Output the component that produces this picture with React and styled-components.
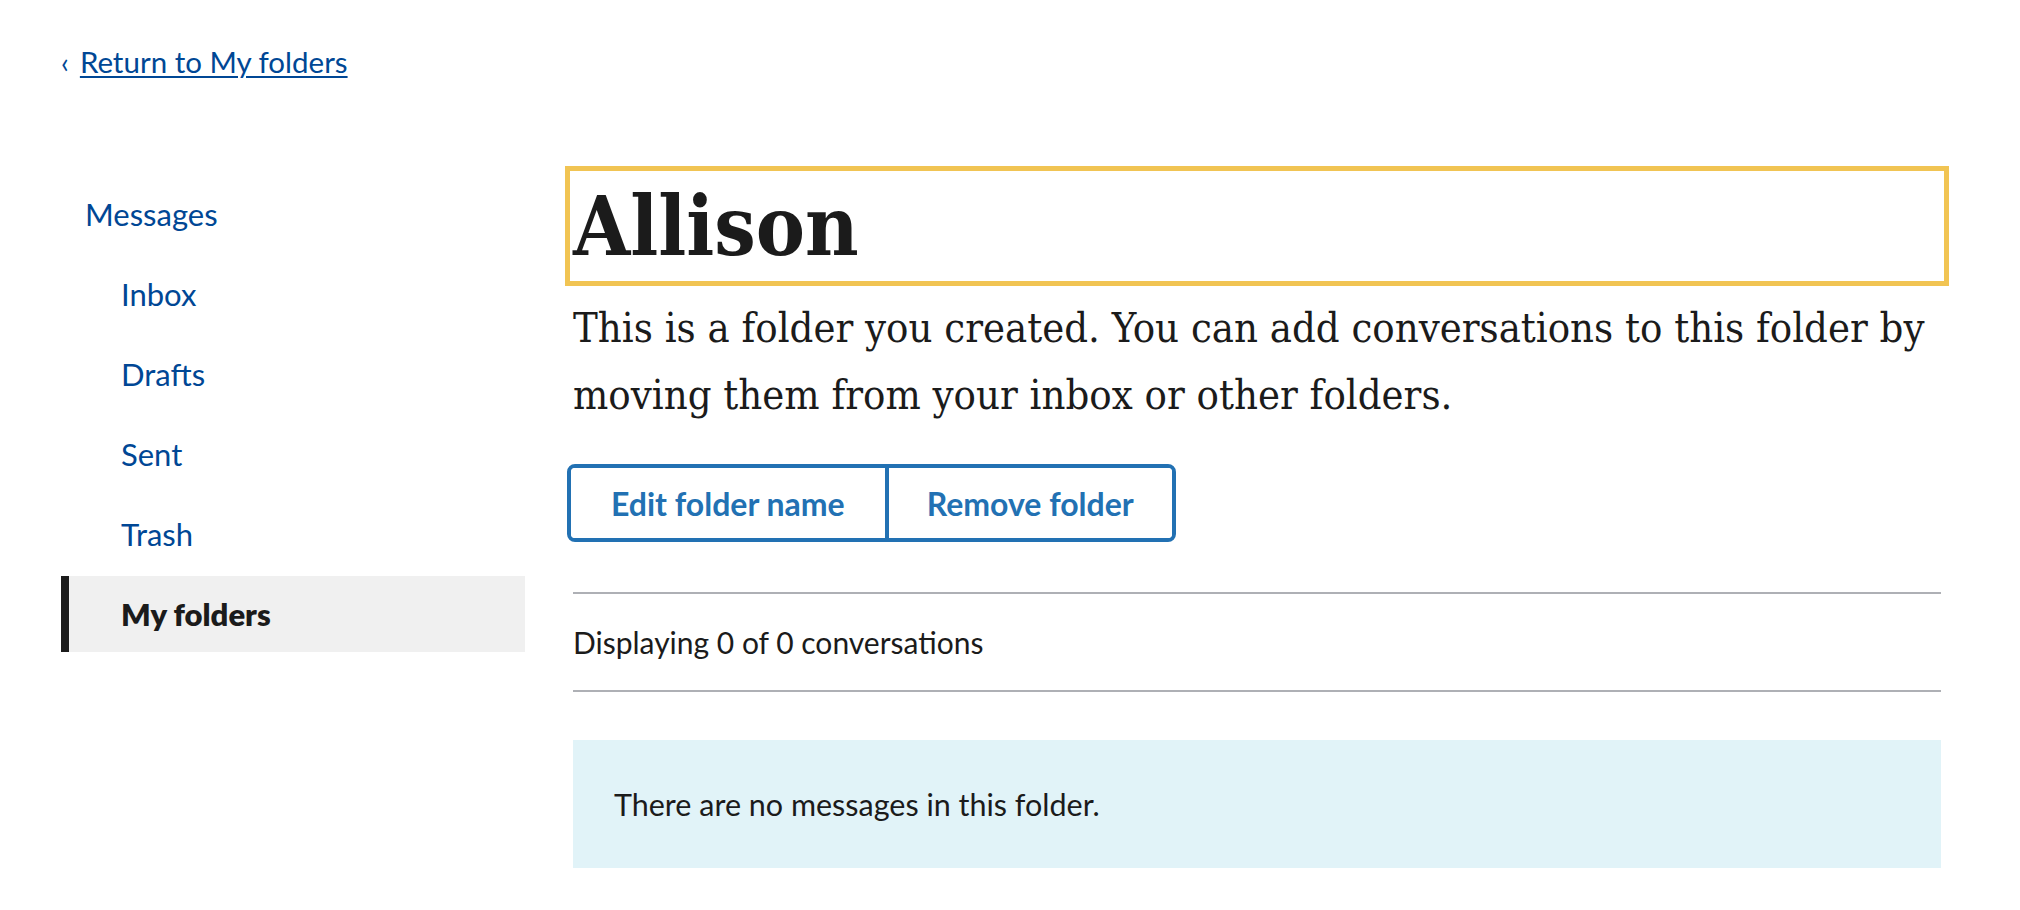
import React from "react";
import styled, { createGlobalStyle } from "styled-components";

const GlobalStyle = createGlobalStyle`
  * { box-sizing: border-box; }
  html, body { margin: 0; padding: 0; background: #ffffff; }
  body {
    font-family: Lato, "Noto Sans", "Liberation Sans", sans-serif;
    color: #1b1b1b;
  }
`;

const Page = styled.div`
  padding: 39px 79px 0 61px;
`;

const BackRow = styled.div`
  display: flex;
  align-items: center;
  height: 46px;
  font-size: 29.5px;
  line-height: 46px;
  color: #004795;
`;

const Chevron = styled.span`
  font-size: 28px;
  margin-right: 11px;
  color: #004795;
`;

const TextLink = styled.a`
  color: #004795;
  text-decoration: underline;
  text-decoration-thickness: 2px;
  text-underline-offset: 3px;
  cursor: pointer;
`;

const Columns = styled.div`
  display: flex;
  gap: 48px;
  margin-top: 89px;
`;

const SideNav = styled.nav`
  width: 464px;
  flex-shrink: 0;
  padding-top: 2px;
  display: flex;
  flex-direction: column;
  gap: 4px;
`;

const NavItem = styled.a`
  display: flex;
  align-items: center;
  height: 76px;
  font-size: 31px;
  text-decoration: none;
  cursor: pointer;
  padding-left: ${(p) => (p.$level === 0 ? 24 : 60)}px;
  color: ${(p) => (p.$active ? "#1b1b1b" : "#004795")};
  font-weight: ${(p) => (p.$active ? 800 : 400)};
  background: ${(p) => (p.$active ? "#f0f0f0" : "transparent")};
  border-left: ${(p) => (p.$active ? "8px solid #1b1b1b" : "none")};
  ${(p) => (p.$active ? "padding-left: 52px;" : "")}
`;

const Main = styled.main`
  flex: 1;
  min-width: 0;
`;

const Title = styled.h1`
  margin: 0;
  font-family: "DejaVu Serif Condensed", "DejaVu Serif", serif;
  font-stretch: condensed;
  font-weight: 700;
  font-size: 82px;
  line-height: 104px;
  color: #1b1b1b;
  outline: 5px solid #f1c453;
  outline-offset: 3px;
`;

const Intro = styled.p`
  margin: 17px 0 0;
  font-family: "DejaVu Serif Condensed", "DejaVu Serif", serif;
  font-stretch: condensed;
  font-size: 41.4px;
  line-height: 67px;
  color: #1b1b1b;
`;

const ButtonGroup = styled.div`
  display: flex;
  width: fit-content;
  margin: 35px 0 0 -6px;
  height: 78px;
  border: 4px solid #2271b3;
  border-radius: 8px;
  overflow: hidden;
`;

const GroupButton = styled.button`
  background: #ffffff;
  border: none;
  padding: 0 ${(p) => p.$pad}px;
  font-family: Lato, "Noto Sans", sans-serif;
  font-weight: 700;
  font-size: 32px;
  color: #2271b3;
  cursor: pointer;
  & + & {
    border-left: 4px solid #2271b3;
  }
`;

const Rule = styled.div`
  height: 2px;
  background: #aeb0b5;
  margin-top: ${(p) => p.$top}px;
`;

const CountRow = styled.div`
  height: 96px;
  display: flex;
  align-items: center;
  font-size: 30px;
  color: #1b1b1b;
`;

const InfoBox = styled.div`
  margin-top: 48px;
  height: 128px;
  background: #e1f3f8;
  padding: 0 41px;
  display: flex;
  align-items: center;
  font-size: 30.5px;
  color: #1b1b1b;
`;

const navItems = [
  { label: "Messages", level: 0 },
  { label: "Inbox", level: 1 },
  { label: "Drafts", level: 1 },
  { label: "Sent", level: 1 },
  { label: "Trash", level: 1 },
  { label: "My folders", level: 1, active: true },
];

export default function App() {
  return (
    <>
      <GlobalStyle />
      <Page>
        <BackRow>
          <Chevron>‹</Chevron>
          <TextLink>Return to My folders</TextLink>
        </BackRow>
        <Columns>
          <SideNav>
            {navItems.map((item) => (
              <NavItem key={item.label} $level={item.level} $active={item.active}>
                {item.label}
              </NavItem>
            ))}
          </SideNav>
          <Main>
            <Title>Allison</Title>
            <Intro>
              This is a folder you created. You can add conversations to this folder by
              moving them from your inbox or other folders.
            </Intro>
            <ButtonGroup>
              <GroupButton $pad={40}>Edit folder name</GroupButton>
              <GroupButton $pad={38}>Remove folder</GroupButton>
            </ButtonGroup>
            <Rule $top={50} />
            <CountRow>Displaying 0 of 0 conversations</CountRow>
            <Rule $top={0} />
            <InfoBox>There are no messages in this folder.</InfoBox>
          </Main>
        </Columns>
      </Page>
    </>
  );
}
